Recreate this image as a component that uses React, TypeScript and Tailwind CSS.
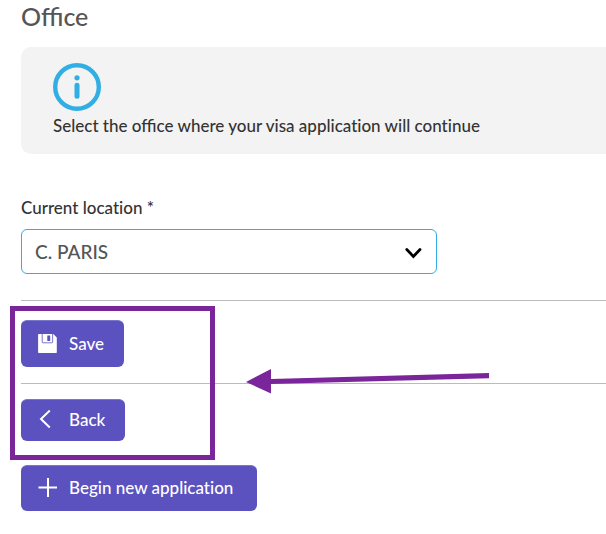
import { useState } from "react";
import type { ReactNode } from "react";

interface ActionButtonProps {
  icon: ReactNode;
  label: string;
  className: string;
}

const InfoIcon = () => (
  <svg width="48" height="48" viewBox="0 0 48 48" fill="none" aria-hidden="true">
    <circle cx="24" cy="24" r="21.8" stroke="#31aee3" strokeWidth="4.4" />
    <circle cx="24" cy="14.8" r="2.6" fill="#31aee3" />
    <path d="M24 22.3v11" stroke="#31aee3" strokeWidth="5" strokeLinecap="round" />
  </svg>
);

const SaveIcon = () => (
  <svg width="20" height="20" viewBox="0 0 20 20" aria-hidden="true">
    <path d="M1.7 0h14.6L19.8 3.5v14.8a.6.6 0 0 1-.6.6H1.7a.6.6 0 0 1-.6-.6V.6a.6.6 0 0 1 .6-.6Z" fill="#fff" />
    <path d="M5.2 0v8a.8.8 0 0 0 .8.8h8.8a.8.8 0 0 0 .8-.8V0" fill="none" stroke="#5b52c0" strokeWidth="0.8" />
    <path d="M10.3 1.5h2.9v5.4h-2.9z" fill="#5b52c0" />
  </svg>
);

const BackIcon = () => (
  <svg width="20" height="20" viewBox="0 0 20 20" fill="none" aria-hidden="true">
    <path d="M12.8 .5 4 9l8.8 8.5" stroke="#fff" strokeWidth="2" />
  </svg>
);

const PlusIcon = () => (
  <svg width="20" height="20" viewBox="0 0 20 20" fill="none" aria-hidden="true">
    <path d="M11 0v19M1.5 9.5h19" stroke="#fff" strokeWidth="2" />
  </svg>
);

const ActionButton = ({ icon, label, className }: ActionButtonProps) => (
  <button
    type="button"
    className={`flex w-fit items-center gap-3 rounded-md border-t border-[#7c75cc] bg-[#5b52c0] pl-4 text-[17px] font-medium text-white hover:bg-[#4a42a8] ${className}`}
  >
    {icon}
    {label}
  </button>
);

const OfficePage = () => {
  const [location, setLocation] = useState("paris");

  return (
    <main className="relative overflow-hidden bg-white pl-[21px] font-['Lato',sans-serif] text-[#333] [font-variant-ligatures:no-common-ligatures]">
      <h1 className="text-[25px] leading-8 font-medium text-[#555] [font-variant-ligatures:normal]">Office</h1>

      <section className="mt-[15px] rounded-l-[10px] bg-[#f3f3f3] px-8 pt-4 pb-[14px]">
        <InfoIcon />
        <p className="text-[17px] leading-[29px] font-medium">
          Select the <span className="[font-variant-ligatures:normal]">office</span> where your visa application will
          continue
        </p>
      </section>

      <form onSubmit={(e) => e.preventDefault()}>
        <div className="mt-10">
          <label htmlFor="location" className="block text-[17px] leading-[27px] font-medium">
            Current location *
          </label>
          <div className="relative mt-2 max-w-[416px]">
            <select
              id="location"
              value={location}
              onChange={(e) => setLocation(e.target.value)}
              className="h-[45px] w-full appearance-none rounded-md border border-[#31aee3] bg-white px-[13px] pt-px text-[19px] font-medium text-[#555]"
            >
              <option value="paris">C. PARIS</option>
            </select>
            <svg
              className="pointer-events-none absolute top-4 right-[14px]"
              width="18"
              height="16"
              viewBox="0 0 18 16"
              fill="none"
              aria-hidden="true"
            >
              <path d="m1.8 4.6 6.6 6.8L15 4.6" stroke="#000" strokeWidth="2.8" strokeLinecap="round" />
            </svg>
          </div>
        </div>

        <div className="mt-[26px] border-t border-[#bbb] pt-[19px]">
          <ActionButton icon={<SaveIcon />} label="Save" className="h-[47px] pr-5" />
        </div>
        <div className="mt-4 border-t border-[#bbb] pt-[15px]">
          <ActionButton icon={<BackIcon />} label="Back" className="h-[42px] pr-5 pb-px" />
        </div>
        <div className="mt-6">
          <ActionButton icon={<PlusIcon />} label="Begin new application" className="h-[46px] pr-6 pb-[2px]" />
        </div>
      </form>

      {/* Highlight around the Save and Back buttons */}
      <div className="pointer-events-none absolute top-[306px] left-[10px] h-[154px] w-[205px] border-5 border-[#7a269a]" />
      <svg
        className="pointer-events-none absolute top-[366px] left-[245px]"
        width="246"
        height="30"
        viewBox="0 0 246 30"
        aria-hidden="true"
      >
        <path d="M1 16 26 3v10l218-6v5.2L26 18v9.5Z" fill="#7a269a" />
      </svg>
    </main>
  );
};

export default OfficePage;
